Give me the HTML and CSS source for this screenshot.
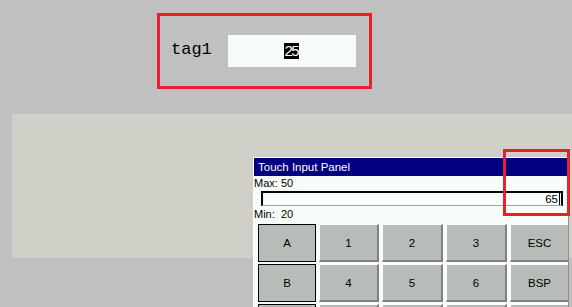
FILE: index.html
```html
<!DOCTYPE html>
<html>
<head>
  <meta charset="UTF-8">
  <title>Touch Input</title>
  <link rel="stylesheet" href="styles.css">
</head>
<body>
  <!-- 태그 표시 -->
  <div class="tagBox">
    <span class="tagLabel">tag1</span>
    <div class="tagValue"><span class="sel">25</span></div>
  </div>

  <div class="stage"></div>

  <!-- 입력 패널 -->
  <div class="panel">
    <div class="panelTitle">Touch Input Panel</div>
    <div class="limit">Max: 50</div>
    <div class="entry">65<span class="caret"></span></div>
    <div class="limit">Min:&nbsp;&nbsp;20</div>
    <div class="keys">
      <div class="key dark">A</div>
      <div class="key">1</div>
      <div class="key">2</div>
      <div class="key">3</div>
      <div class="key">ESC</div>
      <div class="key dark">B</div>
      <div class="key">4</div>
      <div class="key">5</div>
      <div class="key">6</div>
      <div class="key">BSP</div>
      <div class="key dark"></div>
      <div class="key"></div>
      <div class="key"></div>
      <div class="key"></div>
      <div class="key"></div>
    </div>
  </div>

  <div class="mark"></div>
</body>
</html>
```

FILE: styles.css
```css
html, body {
  margin:0; padding:0;
  width:100%; height:100%;
  overflow:hidden;
  background:#c0c0c0;
  font-family:"Liberation Sans", Arial, sans-serif;
}
.tagBox {
  margin:13px 0 0 157px;
  width:209px; height:70px;
  border:3px solid #e8202a;
  display:flex;
  align-items:center;
}
.tagLabel {
  margin-left:11px;
  font-family:"Liberation Mono", monospace;
  font-size:17px;
  color:#000;
  margin-top:-3px;
}
.tagValue {
  margin-left:16px;
  width:128px; height:32px;
  background:#f8fcf8;
  display:flex;
  align-items:center;
  justify-content:center;
}
.sel {
  background:#000;
  color:#fff;
  font-size:15px;
  line-height:16px;
  letter-spacing:-1.5px;
  padding:0 1px 0 0;
}
.stage {
  margin:25px 0 0 12px;
  height:144px;
  background:#d0d0c8;
}
.panel {
  position:absolute;
  left:253px; top:157px;
  width:314px; height:150px;
  overflow:hidden;
  background:#f8fcf8;
  border-left:1px solid #fff;
  border-top:1px solid #fff;
  border-right:1px solid #909090;
  font-size:11px;
  color:#000;
}
.panelTitle {
  height:18px;
  line-height:18px;
  background:#000080;
  color:#fff;
  font-size:11.5px;
  padding-left:4px;
  margin-right:1px;
}
.limit {
  height:13px;
  line-height:13px;
  margin-top:1px;
}
.entry {
  margin:1px 5px 2px 7px;
  height:12px;
  line-height:12px;
  border-top:2px solid #000;
  border-left:2px solid #000;
  border-right:2px solid #000;
  border-bottom:1px solid #a0a0a0;
  text-align:right;
  font-size:11.5px;
  padding-right:1px;
}
.caret {
  display:inline-block;
  width:1px; height:12px;
  background:#000;
  margin-left:1px;
  vertical-align:top;
}
.keys {
  display:grid;
  grid-template-columns:58px 60px 61px 61px 60px;
  grid-auto-rows:38px;
  gap:2px 3px;
  margin:3px 0 0 4px;
}
.key {
  box-sizing:border-box;
  background:#b8bcb8;
  border-top:1px solid #fff;
  border-left:1px solid #fff;
  border-right:2px solid #808080;
  border-bottom:2px solid #808080;
  display:flex;
  align-items:center;
  justify-content:center;
  font-size:11.5px;
}
.key.dark {
  border:1px solid #000;
}
.mark {
  position:absolute;
  left:503px; top:149px;
  width:61px; height:61px;
  border:3px solid #e8202a;
}
```
